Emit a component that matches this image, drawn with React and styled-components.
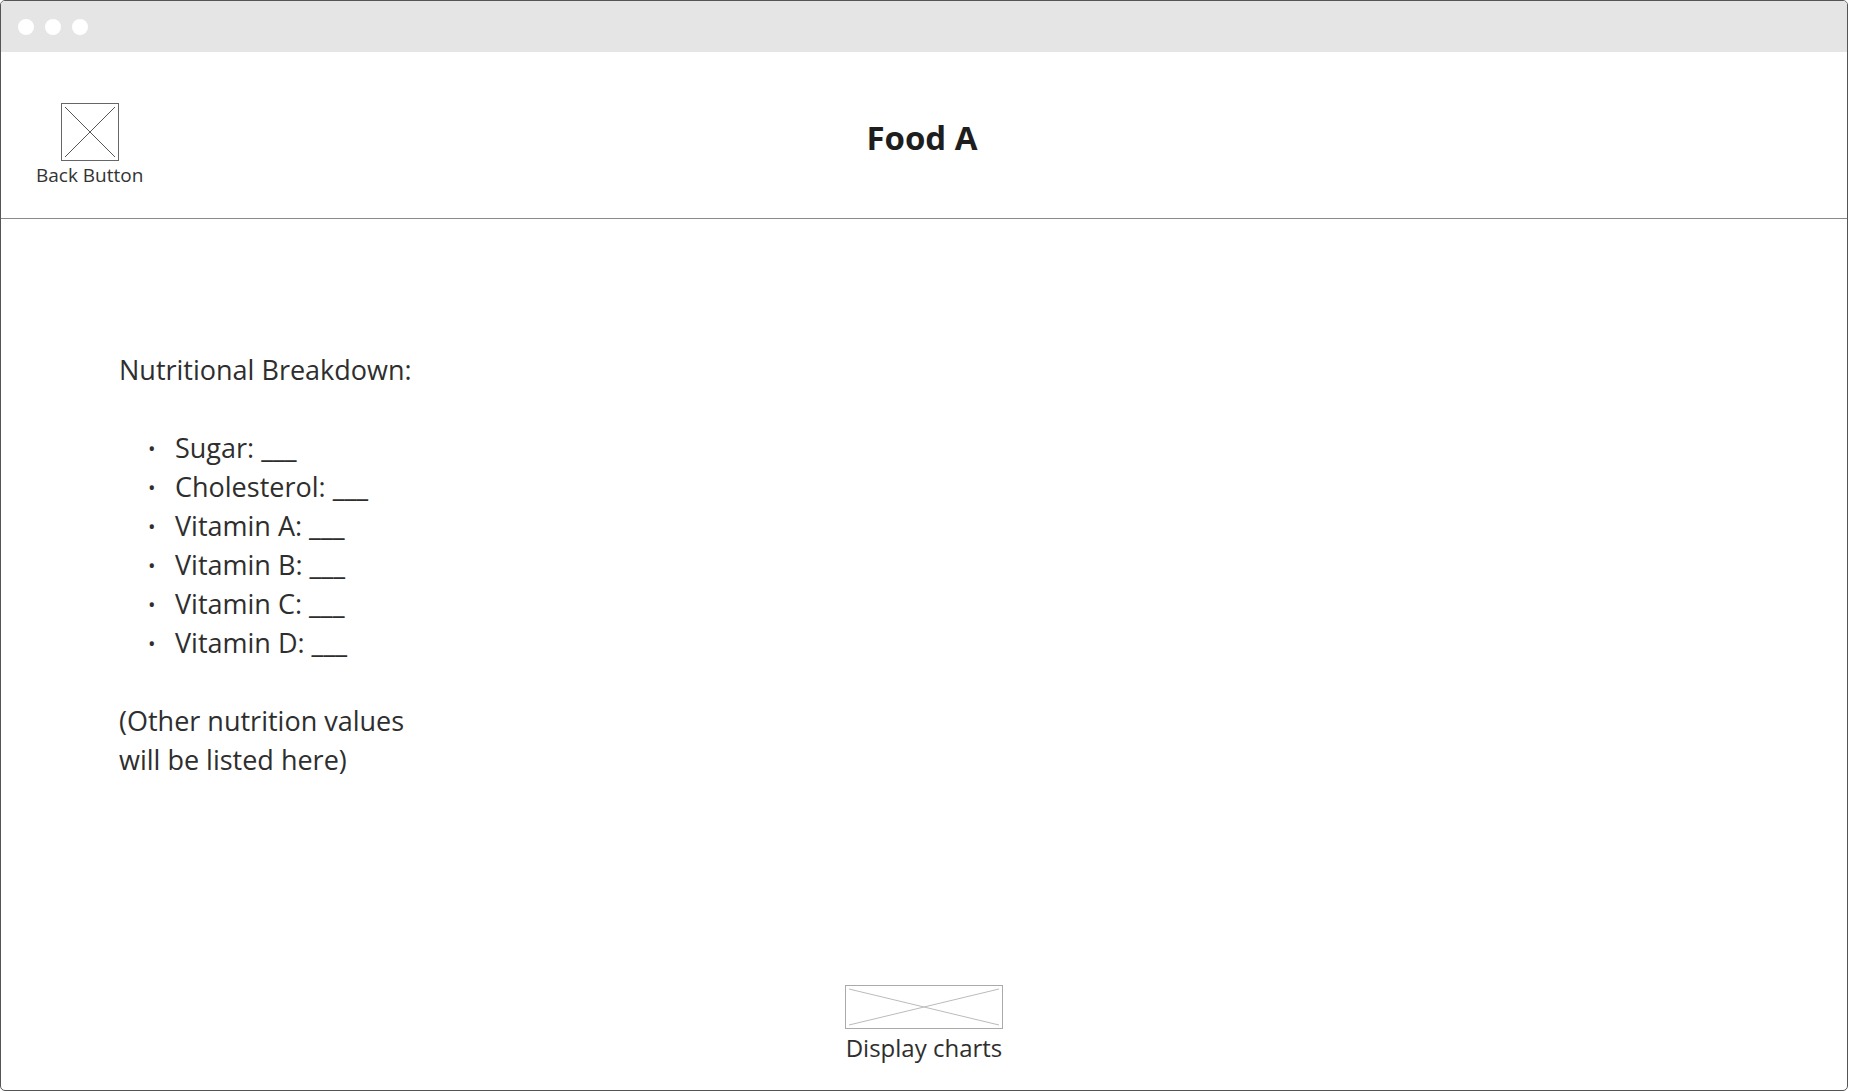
import styled, { createGlobalStyle } from "styled-components";

const GlobalStyle = createGlobalStyle`
    body {
        margin: 0;
        background: #ffffff;
        font-family: "Open Sans", "Noto Sans", sans-serif;
        color: #222222;
    }
`;

const Frame = styled.div`
    width: 1848px;
    height: 1091px;
    box-sizing: border-box;
    border: 1px solid #555555;
    border-radius: 5px;
    overflow: hidden;
    display: flex;
    flex-direction: column;
    background: #ffffff;
`;

const TitleBar = styled.div`
    height: 51px;
    background: #e5e5e5;
    display: flex;
    align-items: center;
    gap: 11px;
    padding-left: 17px;
    flex-shrink: 0;
`;

const Dot = styled.span`
    width: 16px;
    height: 16px;
    border-radius: 50%;
    background: #ffffff;
`;

const Header = styled.header`
    height: 166px;
    border-bottom: 1px solid #8a8a8a;
    display: grid;
    grid-template-columns: 1fr auto 1fr;
    align-items: center;
    flex-shrink: 0;
`;

const BackButton = styled.div`
    justify-self: start;
    margin-left: 35px;
    margin-top: 20px;
    display: flex;
    flex-direction: column;
    align-items: center;
    gap: 1px;
    font-size: 19px;
    color: #333333;
`;

const Placeholder = styled.svg`
    display: block;
`;

const Title = styled.h1`
    margin: 0;
    font-size: 33px;
    font-weight: 700;
    color: #1e1e1e;
    padding: 5px 4px 0 0;
`;

const Content = styled.main`
    flex: 1;
    padding: 131px 0 0 118px;
    font-size: 27px;
    line-height: 39px;
    color: #2e2e2e;
`;

const Text = styled.p`
    margin: 0;
`;

const List = styled.ul`
    list-style: none;
    margin: 39px 0;
    padding: 0 0 0 29px;
`;

const Item = styled.li`
    display: flex;
    height: 39px;
    gap: 16px;

    &::before {
        content: "•";
        font-size: 20px;
        line-height: 41px;
        width: 11px;
    }
`;

const Footer = styled.footer`
    display: flex;
    flex-direction: column;
    align-items: center;
    gap: 2px;
    padding-bottom: 26px;
    font-size: 24px;
    color: #2e2e2e;
`;

function CrossBox({ w, h, stroke, line }) {
    return (
        <Placeholder width={w} height={h} viewBox={`0 0 ${w} ${h}`}>
            <rect x="0.5" y="0.5" width={w - 1} height={h - 1} fill="#fff" stroke={stroke} />
            <line x1="4" y1="4" x2={w - 4} y2={h - 4} stroke={line} />
            <line x1={w - 4} y1="4" x2="4" y2={h - 4} stroke={line} />
        </Placeholder>
    );
}

const nutrients = ["Sugar", "Cholesterol", "Vitamin A", "Vitamin B", "Vitamin C", "Vitamin D"];

export default function App() {
    return (
        <>
            <GlobalStyle />
            <Frame>
                <TitleBar>
                    <Dot />
                    <Dot />
                    <Dot />
                </TitleBar>
                <Header>
                    <BackButton>
                        <CrossBox w={58} h={58} stroke="#666" line="#555" />
                        Back Button
                    </BackButton>
                    <Title>Food A</Title>
                    <div />
                </Header>
                <Content>
                    <Text>Nutritional Breakdown:</Text>
                    <List>
                        {nutrients.map((n) => (
                            <Item key={n}>{n}: ___</Item>
                        ))}
                    </List>
                    <Text>
                        (Other nutrition values
                        <br />
                        will be listed here)
                    </Text>
                </Content>
                <Footer>
                    <CrossBox w={158} h={44} stroke="#aaa" line="#bbb" />
                    Display charts
                </Footer>
            </Frame>
        </>
    );
}
